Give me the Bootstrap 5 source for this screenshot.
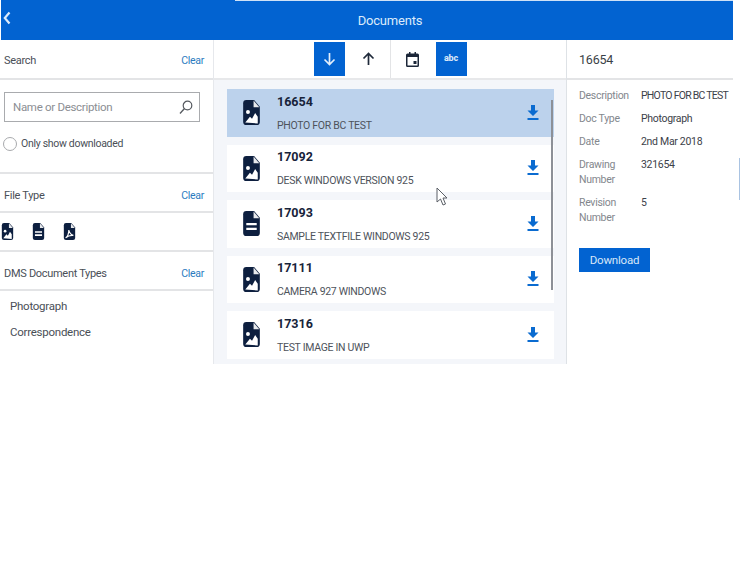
<!DOCTYPE html>
<html lang="en">
<head>
    <meta charset="UTF-8">
    <title>Documents</title>
    <link href="https://cdn.jsdelivr.net/npm/bootstrap@5.3.3/dist/css/bootstrap.min.css" rel="stylesheet">
    <style>
        body {
            background: #fff;
            font-family: Roboto, "Noto Sans", sans-serif;
            font-size: 11px;
            color: #4a4f57;
            overflow: hidden;
        }
        .app-shell { width: 733px; height: 364px; position: relative; }
        .app-bar {
            height: 40px;
            background: #0263d1;
            color: #dcebfb;
            font-size: 13px;
            letter-spacing: -.2px;
            margin-left: 1px;
            padding: 1px 0 0 46px;
            position: relative;
        }
        .app-bar::before {
            content: "";
            position: absolute;
            left: 234px;
            right: 0;
            top: 0;
            height: 1px;
            background: #cfe2f7;
        }
        .back-link { position: absolute; left: 3px; top: 11px; line-height: 0; }
        .main-area { height: 324px; }
        .side-panel { width: 214px; border-right: 1px solid #e6e8ec; }
        .head-row {
            height: 39px;
            border-bottom: 2px solid #e3e4e6;
            padding: 7px 9px 0 4px;
            font-size: 11px;
            letter-spacing: -.3px;
        }
        .head-first { height: 40px; padding-top: 4px; }
        .head-row a { color: #2b7cc0; text-decoration: none; font-size: 10.5px; letter-spacing: -.3px; }
        .search-area { height: 94px; padding: 12px 13px 0 4px; border-bottom: 2px solid #e3e4e6; }
        .search-box {
            height: 30px;
            border: 1.5px solid #a9abae;
            padding: 1px 6px 0 8px;
            color: #8b8e93;
            font-size: 11.5px;
            letter-spacing: -.3px;
        }
        .radio-dot {
            width: 14px;
            height: 14px;
            border: 1px solid #a8aaad;
            border-radius: 50%;
            display: inline-block;
            margin-left: -1px;
        }
        .radio-row { margin-top: 14px; font-size: 10.5px; letter-spacing: -.3px; }
        .type-icons { height: 39px; border-bottom: 2px solid #e3e4e6; padding-left: 1px; gap: 18px; }
        .dms-list { padding: 2px 0 0 10px; font-size: 11.5px; letter-spacing: -.25px; line-height: 26px; }
        .center-panel { width: 352px; background: #f4f6fa; position: relative; }
        .sort-bar {
            height: 40px;
            background: #fff;
            border-bottom: 2px solid #e7e8ea;
            padding-top: 2px;
        }
        .sort-btn { width: 31px; height: 34px; }
        .sort-btn.on { background: #0263d1; }
        .sort-sep { width: 1px; height: 38px; margin: -2px 6px 0; background: #e3e4e6; }
        .abc-text { color: #d7e6f8; font-size: 9px; font-weight: 800; letter-spacing: -.2px; }
        .doc-list { padding: 9px 12px 0 13px; }
        .doc-row {
            height: 47.5px;
            margin-bottom: 8px;
            background: #fff;
            padding: 0 15px 0 16px;
        }
        .doc-row.picked { background: #bcd2ec; }
        .doc-num { font-size: 12.5px; font-weight: 700; color: #17233a; line-height: 16px; }
        .doc-name { font-size: 10.5px; letter-spacing: -.3px; color: #4e535b; line-height: 14px; margin-top: 9px; }
        .doc-text { margin-left: 17px; margin-top: 1px; }
        .scroll-thumb {
            position: absolute;
            left: 337px;
            top: 60px;
            width: 2px;
            height: 190px;
            background: #8d9097;
        }
        .detail-panel { width: 167px; }
        .detail-head {
            height: 40px;
            border-bottom: 2px solid #e3e4e6;
            padding: 3px 0 0 12px;
            font-size: 12.5px;
            letter-spacing: -.2px;
            color: #3a3f47;
        }
        .detail-grid {
            display: grid;
            grid-template-columns: 62px auto;
            row-gap: 8px;
            padding: 8px 0 0 12px;
            font-size: 10.5px;
            letter-spacing: -.3px;
            line-height: 15px;
        }
        .detail-grid .lbl { color: #83878d; }
        .detail-grid .val { color: #3c4149; white-space: nowrap; }
        .detail-grid .val-caps { letter-spacing: -.75px; }
        .get-btn {
            margin: 23px 0 0 12px;
            width: 71px;
            height: 24px;
            padding: 1px 0 0;
            border: 0;
            border-radius: 0;
            background: #0263d1;
            color: #d7e6f8;
            font-size: 11.5px;
            letter-spacing: -.2px;
        }
        .mouse-arrow { position: absolute; left: 436px; top: 187px; line-height: 0; }
        .stray-line { position: absolute; left: 739px; top: 158px; width: 1px; height: 42px; background: #a9c3e2; }
    </style>
</head>
<body>
    <svg width="0" height="0" class="position-absolute">
        <symbol id="file-pic" viewBox="0 0 16 24">
            <path fill="#0d1f3f" d="M3 0h7.500L16 6.500V21a3 3 0 0 1-3 3H3a3 3 0 0 1-3-3V3a3 3 0 0 1 3-3z"/>
            <path fill="#fff" d="M10 .5 15.500 7H10z" opacity=".9"/>
            <circle cx="4.600" cy="11.500" r="1.900" fill="#fff"/>
            <path fill="#fff" d="M2 21.500 6.500 16l2 2 3-5.500 2.500 3.500v6.500z"/>
        </symbol>
        <symbol id="file-txt" viewBox="0 0 16 24">
            <path fill="#0d1f3f" d="M3 0h7.500L16 6.500V21a3 3 0 0 1-3 3H3a3 3 0 0 1-3-3V3a3 3 0 0 1 3-3z"/>
            <path fill="#fff" d="M10 .5 15.500 7H10z" opacity=".9"/>
            <path fill="#fff" d="M3 11.500h10v2.200H3zM3 16h10v2.200H3z"/>
        </symbol>
        <symbol id="file-pdf" viewBox="0 0 16 24">
            <path fill="#0d1f3f" d="M3 0h7.500L16 6.500V21a3 3 0 0 1-3 3H3a3 3 0 0 1-3-3V3a3 3 0 0 1 3-3z"/>
            <path fill="#fff" d="M10 .5 15.500 7H10z" opacity=".9"/>
            <path fill="none" stroke="#fff" stroke-width="1.600" d="M2.500 21c3-2 4.500-6 4.500-11 1 4 3 6.500 6.500 7.500-4-.5-7.500.5-11 3.500z"/>
        </symbol>
        <symbol id="save-arrow" viewBox="0 0 12 16">
            <path fill="#0a6bd0" d="M4 0h4v5.500h3.500L6 11 .5 5.500H4zM.5 13h11v2H.5z"/>
        </symbol>
    </svg>

    <div class="app-shell">
        <div class="app-bar d-flex align-items-center justify-content-center">Documents</div>
        <a class="back-link" href="#" aria-label="Back">
            <svg width="8" height="14" viewBox="0 0 8 14"><path fill="none" stroke="#dcebfb" stroke-width="2.200" d="M6.500 1.500 1.800 7l4.700 5.500"/></svg>
        </a>

        <div class="main-area d-flex">
            <div class="side-panel flex-shrink-0">
                <div class="head-row head-first d-flex align-items-center justify-content-between"><span>Search</span><a href="#">Clear</a></div>
                <div class="search-area">
                    <div class="search-box d-flex align-items-center justify-content-between">
                        <span>Name or Description</span>
                        <svg width="14" height="15" viewBox="0 0 14 15"><circle cx="8.500" cy="5.500" r="4.300" fill="none" stroke="#55595f" stroke-width="1.200"/><path stroke="#55595f" stroke-width="1.300" d="M5.500 8.500 1 13.500"/></svg>
                    </div>
                    <div class="radio-row d-flex align-items-center gap-1"><span class="radio-dot"></span><span>Only show downloaded</span></div>
                </div>
                <div class="head-row d-flex align-items-center justify-content-between"><span>File Type</span><a href="#">Clear</a></div>
                <div class="type-icons d-flex align-items-center">
                    <svg width="13" height="17"><use href="#file-pic"/></svg>
                    <svg width="13" height="17"><use href="#file-txt"/></svg>
                    <svg width="13" height="17"><use href="#file-pdf"/></svg>
                </div>
                <div class="head-row d-flex align-items-center justify-content-between"><span>DMS Document Types</span><a href="#">Clear</a></div>
                <div class="dms-list">
                    <div>Photograph</div>
                    <div>Correspondence</div>
                </div>
            </div>

            <div class="center-panel flex-shrink-0">
                <div class="sort-bar d-flex justify-content-center">
                    <div class="sort-btn on d-flex align-items-center justify-content-center">
                        <svg width="13" height="14" viewBox="0 0 13 14"><path fill="none" stroke="#e3eefb" stroke-width="1.700" d="M6.500 1v11.500M1.500 7.500l5 5 5-5"/></svg>
                    </div>
                    <div class="sort-btn ms-2 d-flex align-items-center justify-content-center">
                        <svg width="13" height="14" viewBox="0 0 13 14"><path fill="none" stroke="#1f2a3a" stroke-width="1.700" d="M6.500 13V1.500M1.500 6.500l5-5 5 5"/></svg>
                    </div>
                    <div class="sort-sep"></div>
                    <div class="sort-btn d-flex align-items-center justify-content-center">
                        <svg width="13" height="15" viewBox="0 0 13 15"><path fill="#1b2638" d="M3 0h1.500v1.500h4V0H10v1.500h1.500A1.500 1.500 0 0 1 13 3v10.500a1.500 1.500 0 0 1-1.500 1.500h-10A1.500 1.500 0 0 1 0 13.500V3a1.500 1.500 0 0 1 1.500-1.500H3z"/><path fill="#fff" d="M1.500 5h10v8.500h-10z"/><path fill="#1b2638" d="M7.500 9h3v3h-3z"/></svg>
                    </div>
                    <div class="sort-btn on ms-2 d-flex align-items-center justify-content-center"><span class="abc-text">abc</span></div>
                </div>
                <div class="doc-list">
                    <div class="doc-row picked d-flex align-items-center">
                        <svg width="17" height="25" class="flex-shrink-0"><use href="#file-pic"/></svg>
                        <div class="doc-text flex-grow-1"><div class="doc-num">16654</div><div class="doc-name">PHOTO FOR BC TEST</div></div>
                        <svg width="12" height="16" class="flex-shrink-0"><use href="#save-arrow"/></svg>
                    </div>
                    <div class="doc-row d-flex align-items-center">
                        <svg width="17" height="25" class="flex-shrink-0"><use href="#file-pic"/></svg>
                        <div class="doc-text flex-grow-1"><div class="doc-num">17092</div><div class="doc-name">DESK WINDOWS VERSION 925</div></div>
                        <svg width="12" height="16" class="flex-shrink-0"><use href="#save-arrow"/></svg>
                    </div>
                    <div class="doc-row d-flex align-items-center">
                        <svg width="17" height="25" class="flex-shrink-0"><use href="#file-txt"/></svg>
                        <div class="doc-text flex-grow-1"><div class="doc-num">17093</div><div class="doc-name">SAMPLE TEXTFILE WINDOWS 925</div></div>
                        <svg width="12" height="16" class="flex-shrink-0"><use href="#save-arrow"/></svg>
                    </div>
                    <div class="doc-row d-flex align-items-center">
                        <svg width="17" height="25" class="flex-shrink-0"><use href="#file-pic"/></svg>
                        <div class="doc-text flex-grow-1"><div class="doc-num">17111</div><div class="doc-name">CAMERA 927 WINDOWS</div></div>
                        <svg width="12" height="16" class="flex-shrink-0"><use href="#save-arrow"/></svg>
                    </div>
                    <div class="doc-row d-flex align-items-center">
                        <svg width="17" height="25" class="flex-shrink-0"><use href="#file-pic"/></svg>
                        <div class="doc-text flex-grow-1"><div class="doc-num">17316</div><div class="doc-name">TEST IMAGE IN UWP</div></div>
                        <svg width="12" height="16" class="flex-shrink-0"><use href="#save-arrow"/></svg>
                    </div>
                </div>
                <div class="scroll-thumb"></div>
            </div>

            <div class="detail-panel flex-shrink-0 border-start">
                <div class="detail-head d-flex align-items-center">16654</div>
                <div class="detail-grid">
                    <div class="lbl">Description</div><div class="val val-caps">PHOTO FOR BC TEST</div>
                    <div class="lbl">Doc Type</div><div class="val">Photograph</div>
                    <div class="lbl">Date</div><div class="val">2nd Mar 2018</div>
                    <div class="lbl">Drawing Number</div><div class="val">321654</div>
                    <div class="lbl">Revision Number</div><div class="val">5</div>
                </div>
                <button class="btn get-btn" type="button">Download</button>
            </div>
        </div>

        <div class="mouse-arrow">
            <svg width="12" height="19" viewBox="0 0 12 19"><path fill="#fff" stroke="#5a5f66" d="M1 1v14l3.500-3 2.500 6 2.500-1-2.500-6H11z"/></svg>
        </div>
    </div>
    <div class="stray-line"></div>

    <script src="https://cdn.jsdelivr.net/npm/bootstrap@5.3.3/dist/js/bootstrap.bundle.min.js"></script>
</body>
</html>
